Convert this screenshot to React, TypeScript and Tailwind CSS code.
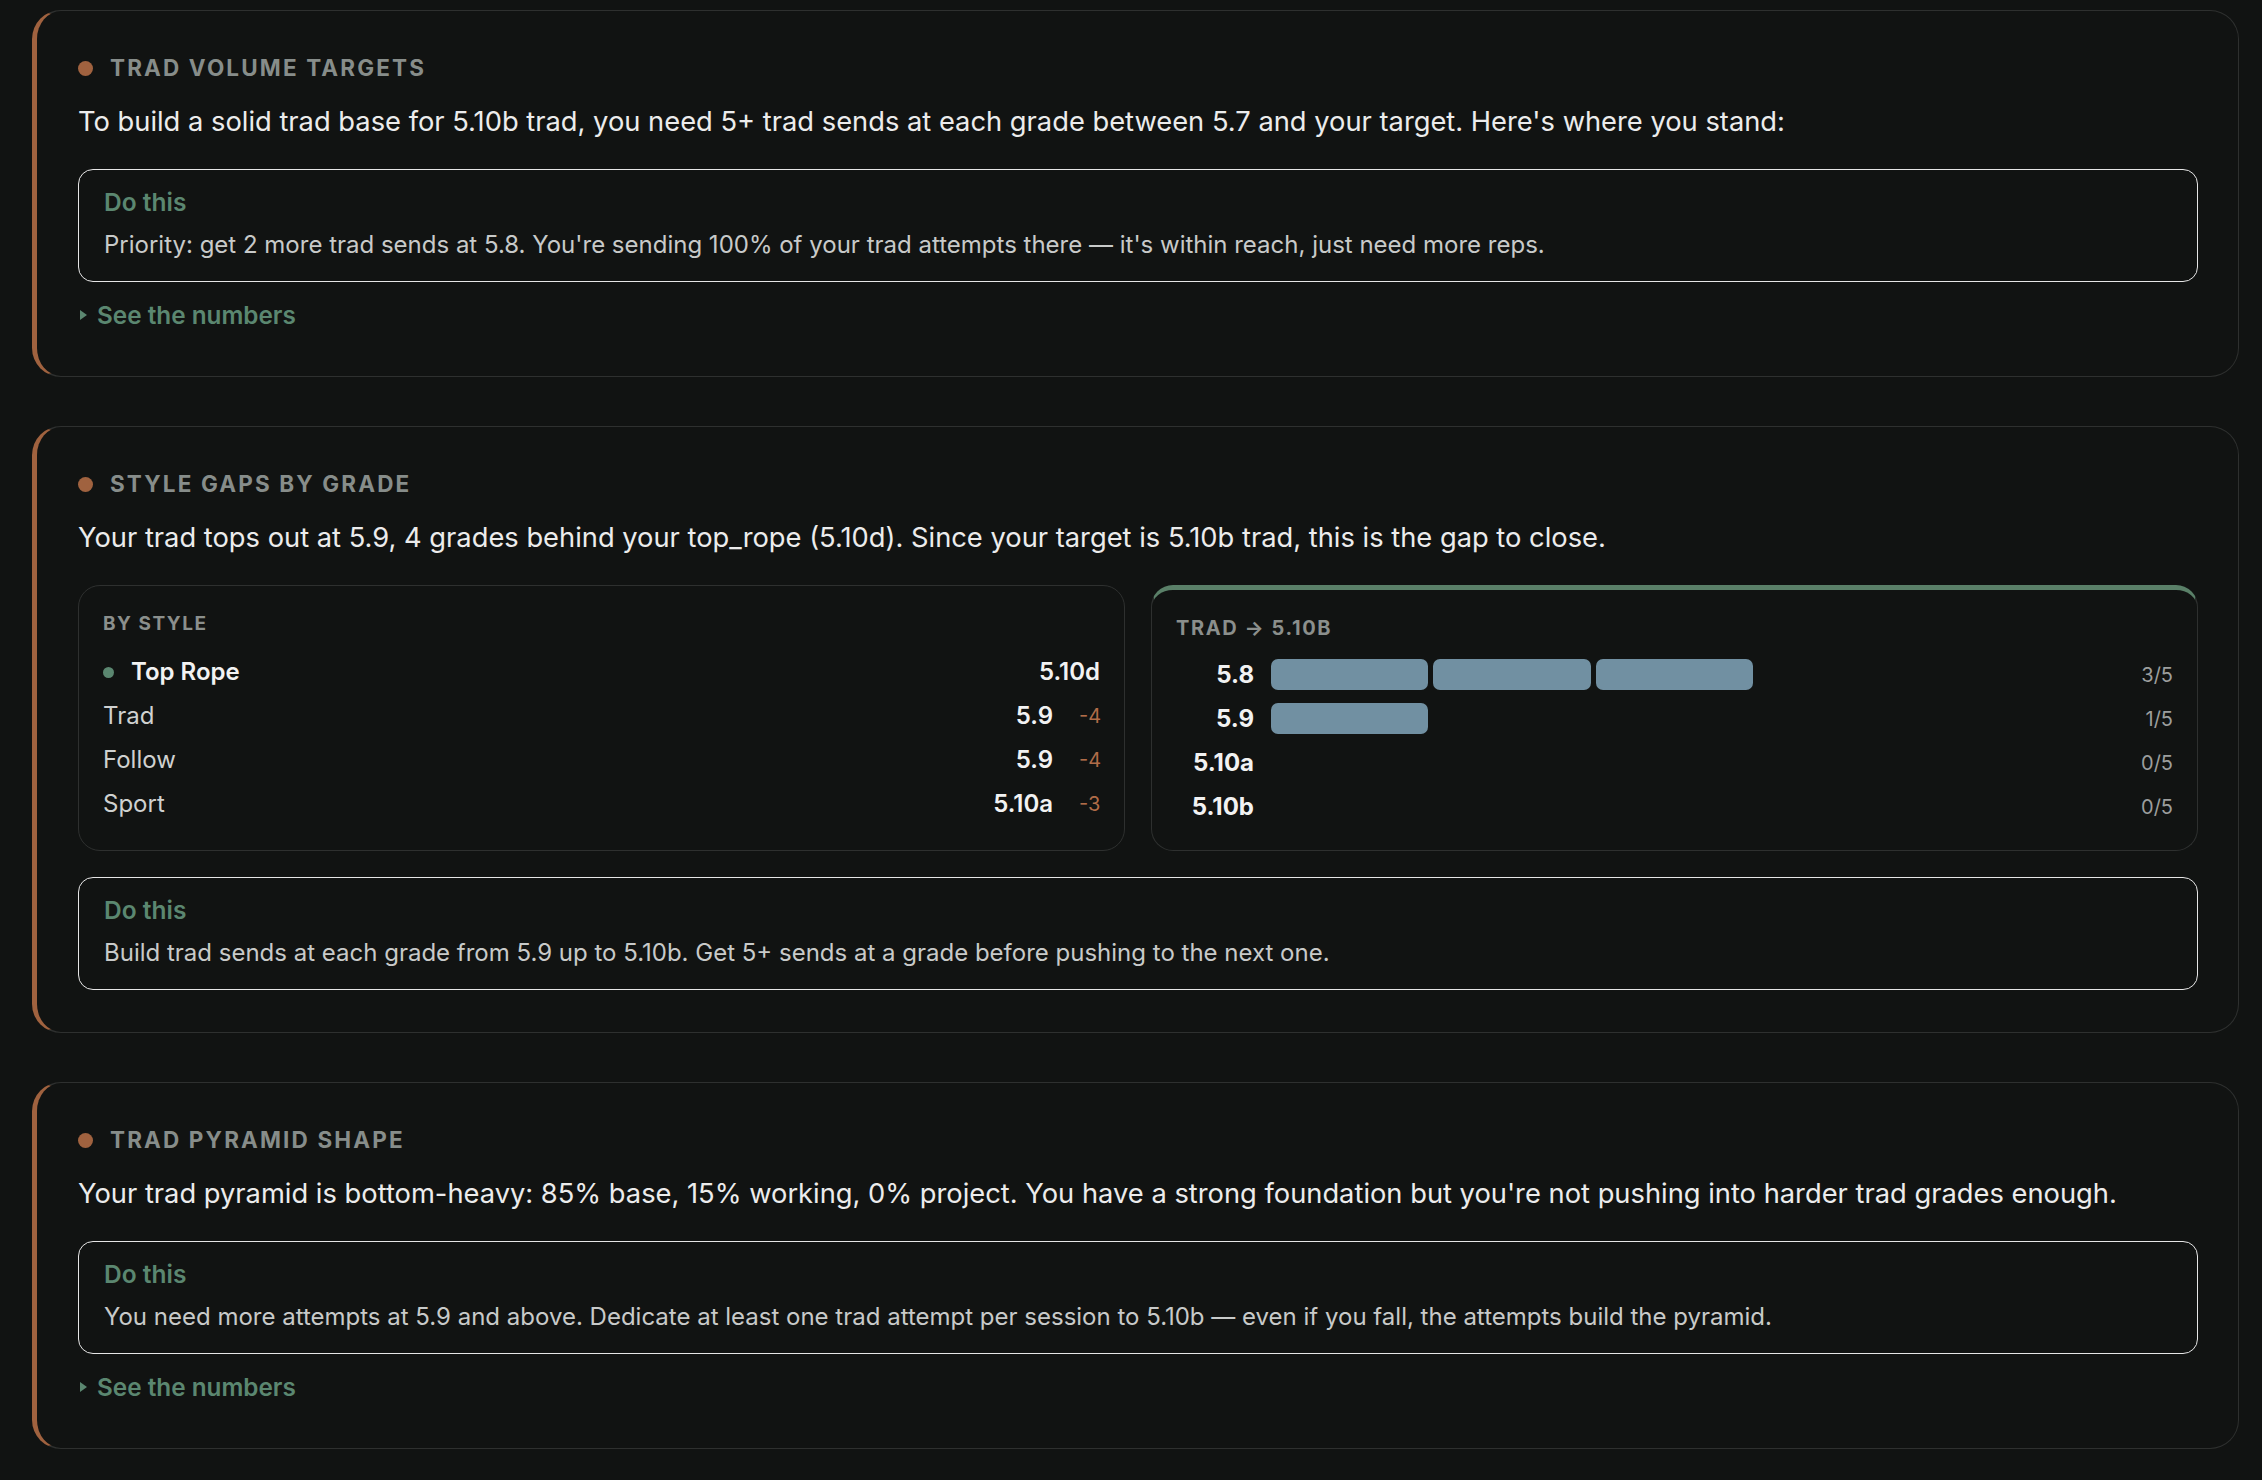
import React from "react";

const styleRows = [
  { name: "Top Rope", grade: "5.10d", delta: null as string | null, top: true },
  { name: "Trad", grade: "5.9", delta: "-4", top: false },
  { name: "Follow", grade: "5.9", delta: "-4", top: false },
  { name: "Sport", grade: "5.10a", delta: "-3", top: false },
];

const barRows = [
  { grade: "5.8", n: 3 },
  { grade: "5.9", n: 1 },
  { grade: "5.10a", n: 0 },
  { grade: "5.10b", n: 0 },
];

function Card({ title, body, children }: { title: string; body: string; children: React.ReactNode }) {
  return (
    <section className="rounded-[29px] border-[1.5px] border-[#2e302f] border-l-[5px] border-l-[#a0623f] bg-[#111312] pl-[41px] pr-[40px] pt-[41px] pb-[42px]">
      <div className="flex h-[32px] items-center gap-[17px]">
        <span className="h-[15px] w-[15px] shrink-0 rounded-full bg-[#a0623f]" />
        <span className="text-[22.5px] font-bold uppercase tracking-[0.095em] text-[#878d8a]">{title}</span>
      </div>
      <p className="mt-[20px] text-[27.3px] leading-[36px] text-[#ececec]">{body}</p>
      {children}
    </section>
  );
}

function DoThis({ text }: { text: string }) {
  return (
    <div className="mt-[29px] rounded-[15px] border-[1.5px] border-[#e6e6e6] px-[25px] pt-[17px] pb-[21px]">
      <div className="text-[24.5px] font-semibold leading-[30px] text-[#5b8770]">Do this</div>
      <div className="mt-[13px] text-[24px] leading-[30px] text-[#c8cac9]">{text}</div>
    </div>
  );
}

function SeeNumbers() {
  return (
    <div className="mt-[18px] mb-[4px] flex h-[30px] items-center gap-[10px] pl-[2px]">
      <svg width="7" height="10" viewBox="0 0 7 10">
        <polygon points="0,0 7,5 0,10" fill="#5b8770" />
      </svg>
      <span className="text-[24.3px] font-semibold leading-[30px] text-[#5b8770]">See the numbers</span>
    </div>
  );
}

export default function App() {
  return (
    <div className="min-h-[1480px] bg-[#111312] pt-[10px] pl-[32px] pr-[23px] pb-[20px] font-['Inter',sans-serif]">
      <div className="flex flex-col gap-[49px]">
        <Card
          title="Trad Volume Targets"
          body="To build a solid trad base for 5.10b trad, you need 5+ trad sends at each grade between 5.7 and your target. Here's where you stand:"
        >
          <DoThis text="Priority: get 2 more trad sends at 5.8. You're sending 100% of your trad attempts there — it's within reach, just need more reps." />
          <SeeNumbers />
        </Card>

        <Card
          title="Style Gaps by Grade"
          body="Your trad tops out at 5.9, 4 grades behind your top_rope (5.10d). Since your target is 5.10b trad, this is the gap to close."
        >
          <div className="mt-[29px] grid grid-cols-2 gap-[26px]">
            <div className="h-[266px] rounded-[22px] border-[1.5px] border-[#2e302f] px-[24px] pt-[25px]">
              <div className="text-[19px] font-bold uppercase leading-[26px] tracking-[0.08em] text-[#8b8f8c]">By Style</div>
              <div className="mt-[13px] flex flex-col">
                {styleRows.map((r) => (
                  <div key={r.name} className="flex h-[44px] items-center">
                    {r.top && <span className="mr-[17px] h-[11px] w-[11px] rounded-full bg-[#5b8770]" />}
                    <span className={r.top ? "text-[24px] font-semibold text-[#f2f2f2]" : "text-[24px] text-[#cfd1d0]"}>{r.name}</span>
                    <span className="ml-auto text-[24px] font-semibold text-[#f2f2f2]">{r.grade}</span>
                    {r.delta && <span className="ml-[26px] w-[21px] text-right text-[20px] text-[#b06c48]">{r.delta}</span>}
                  </div>
                ))}
              </div>
            </div>
            <div className="h-[266px] rounded-[22px] border-[1.5px] border-t-[5px] border-[#2e302f] border-t-[#5a8068] px-[24px] pt-[25px]">
              <div className="text-[20px] font-bold uppercase leading-[26px] tracking-[0.08em] text-[#8b8f8c]">Trad → 5.10b</div>
              <div className="mt-[18px] flex flex-col gap-[13px]">
                {barRows.map((r) => (
                  <div key={r.grade} className="flex h-[31px] items-center">
                    <span className="w-[78px] shrink-0 text-right text-[24px] font-bold text-[#f2f2f2]">{r.grade}</span>
                    <div className="ml-[17px] flex h-[31px] flex-1 gap-[5px]">
                      {[0, 1, 2, 3, 4].map((i) => (
                        <div key={i} className={i < r.n ? "flex-1 rounded-[7px] bg-[#7190a2]" : "flex-1"} />
                      ))}
                    </div>
                    <span className="ml-[15px] w-[80px] shrink-0 text-right text-[20px] text-[#9c9e9d]">{r.n}/5</span>
                  </div>
                ))}
              </div>
            </div>
          </div>
          <div className="mt-[-3px]">
            <DoThis text="Build trad sends at each grade from 5.9 up to 5.10b. Get 5+ sends at a grade before pushing to the next one." />
          </div>
        </Card>

        <Card
          title="Trad Pyramid Shape"
          body="Your trad pyramid is bottom-heavy: 85% base, 15% working, 0% project. You have a strong foundation but you're not pushing into harder trad grades enough."
        >
          <DoThis text="You need more attempts at 5.9 and above. Dedicate at least one trad attempt per session to 5.10b — even if you fall, the attempts build the pyramid." />
          <SeeNumbers />
        </Card>
      </div>
    </div>
  );
}
